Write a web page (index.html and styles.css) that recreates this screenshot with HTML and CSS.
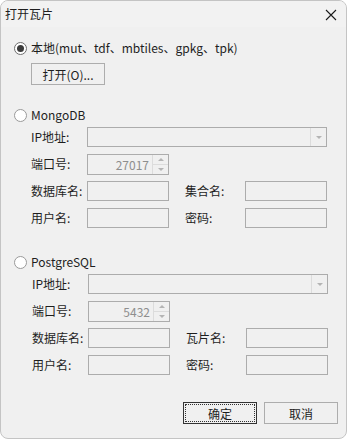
FILE: index.html
```html
<!DOCTYPE html>
<html lang="zh-CN">
<head>
    <meta charset="UTF-8">
    <meta name="viewport" content="width=device-width, initial-scale=1.0">
    <title>打开瓦片</title>
    <link rel="stylesheet" href="styles.css">
</head>
<body>
    <div class="window">
        <div class="title-bar">
            <span class="title">打开瓦片</span>
            <span class="close">
                <svg width="12" height="12" viewBox="0 0 12 12"><path d="M1 1 L11 11 M11 1 L1 11" stroke="#1a1a1a" stroke-width="1.1" fill="none"/></svg>
            </span>
        </div>
        <div class="content">
            <div class="option option-local">
                <span class="radio checked"></span>
                <span>本地(mut、tdf、mbtiles、gpkg、tpk)</span>
            </div>
            <button class="btn btn-open">打开(O)...</button>

            <div class="option option-mongo">
                <span class="radio"></span>
                <span>MongoDB</span>
            </div>
            <div class="form">
                <label>IP地址:</label>
                <div class="field combo"><span class="combo-arrow"></span></div>
                <label>端口号:</label>
                <div class="field spin"><span class="spin-value">27017</span><span class="spin-btns"><i class="up"></i><i class="down"></i></span></div>
                <span></span><span></span><span></span>
                <label>数据库名:</label>
                <div class="field"></div>
                <span></span>
                <label>集合名:</label>
                <div class="field"></div>
                <label>用户名:</label>
                <div class="field"></div>
                <span></span>
                <label>密码:</label>
                <div class="field"></div>
            </div>

            <div class="option option-pg">
                <span class="radio"></span>
                <span>PostgreSQL</span>
            </div>
            <div class="form form-pg">
                <label>IP地址:</label>
                <div class="field combo"><span class="combo-arrow"></span></div>
                <label>端口号:</label>
                <div class="field spin"><span class="spin-value">5432</span><span class="spin-btns"><i class="up"></i><i class="down"></i></span></div>
                <span></span><span></span><span></span>
                <label>数据库名:</label>
                <div class="field"></div>
                <span></span>
                <label>瓦片名:</label>
                <div class="field"></div>
                <label>用户名:</label>
                <div class="field"></div>
                <span></span>
                <label>密码:</label>
                <div class="field"></div>
            </div>

            <div class="actions">
                <button class="btn btn-default"><span>确定</span></button>
                <button class="btn">取消</button>
            </div>
        </div>
    </div>
</body>
</html>
```

FILE: styles.css
```css
* {
    box-sizing: border-box;
}
body {
    margin: 0;
    font-family: "Noto Sans CJK SC", "Noto Sans", sans-serif;
    font-size: 12px;
    color: #1e1e1e;
    background: #ffffff;
}
.window {
    width: 347px;
    height: 439px;
    border: 1px solid #c4c4c4;
    border-radius: 8px;
    background: #f0f0f0;
    overflow: hidden;
}
.title-bar {
    height: 26px;
    display: flex;
    align-items: center;
    justify-content: space-between;
    padding: 0 9px 0 4px;
    background: #f2f2f2;
}
.title {
    font-size: 12px;
    line-height: 26px;
}
.close {
    display: flex;
    width: 12px;
    height: 12px;
    margin-top: 1px;
}
.content {
    padding: 0 8px 0 13px;
}
.option {
    display: flex;
    align-items: center;
    gap: 4px;
    height: 16px;
    line-height: 16px;
}
.option-local {
    margin-top: 13px;
}
.option-mongo {
    margin-top: 22px;
}
.option-pg {
    margin-top: 26px;
}
.radio {
    width: 13px;
    height: 13px;
    border: 1px solid #9a9a9a;
    border-radius: 50%;
    background: #ffffff;
    display: flex;
    align-items: center;
    justify-content: center;
}
.radio.checked {
    border-color: #6e6e6e;
}
.radio.checked::after {
    content: "";
    width: 7px;
    height: 7px;
    border-radius: 50%;
    background: #3b3b3b;
}
.btn {
    font-family: inherit;
    font-size: 12px;
    color: #1e1e1e;
    height: 22px;
    width: 74px;
    padding: 0;
    border: 1px solid #adadad;
    background: #f0f0f0;
}
.btn-open {
    display: block;
    margin: 7px 0 0 17px;
}
.form {
    display: grid;
    grid-template-columns: 56px 82px 16px 60px 82px;
    grid-auto-rows: 20px;
    row-gap: 7px;
    margin: 4px 0 0 17px;
}
.form-pg {
    margin-left: 18px;
}
.form label {
    display: flex;
    align-items: center;
    line-height: 20px;
}
.field {
    border: 1px solid #acacac;
    background: #f0f0f0;
    height: 20px;
}
.combo {
    grid-column: 2 / 6;
    display: flex;
    justify-content: flex-end;
}
.combo-arrow {
    width: 16px;
    border-left: 1px solid #dcdcdc;
    display: flex;
    align-items: center;
    justify-content: center;
}
.combo-arrow::after {
    content: "";
    border-left: 3px solid transparent;
    border-right: 3px solid transparent;
    border-top: 3px solid #b4b4b4;
}
.spin {
    display: flex;
    justify-content: flex-end;
    height: 21px;
}
.spin-value {
    color: #8e8e8e;
    line-height: 19px;
    padding-right: 3px;
}
.spin-btns {
    width: 16px;
    border-left: 1px solid #dcdcdc;
    display: flex;
    flex-direction: column;
}
.spin-btns i {
    flex: 1;
    display: flex;
    align-items: center;
    justify-content: center;
}
.spin-btns .up {
    border-bottom: 1px solid #dcdcdc;
}
.spin-btns .up::after {
    content: "";
    border-left: 3px solid transparent;
    border-right: 3px solid transparent;
    border-bottom: 3px solid #b4b4b4;
}
.spin-btns .down::after {
    content: "";
    border-left: 3px solid transparent;
    border-right: 3px solid transparent;
    border-top: 3px solid #b4b4b4;
}
.actions {
    display: flex;
    justify-content: flex-end;
    gap: 7px;
    margin-top: 27px;
}
.btn-default {
    border-color: #333333;
    padding: 1px;
}
.btn-default span {
    display: flex;
    align-items: center;
    justify-content: center;
    height: 100%;
    border: 1px dotted #333333;
}
```
